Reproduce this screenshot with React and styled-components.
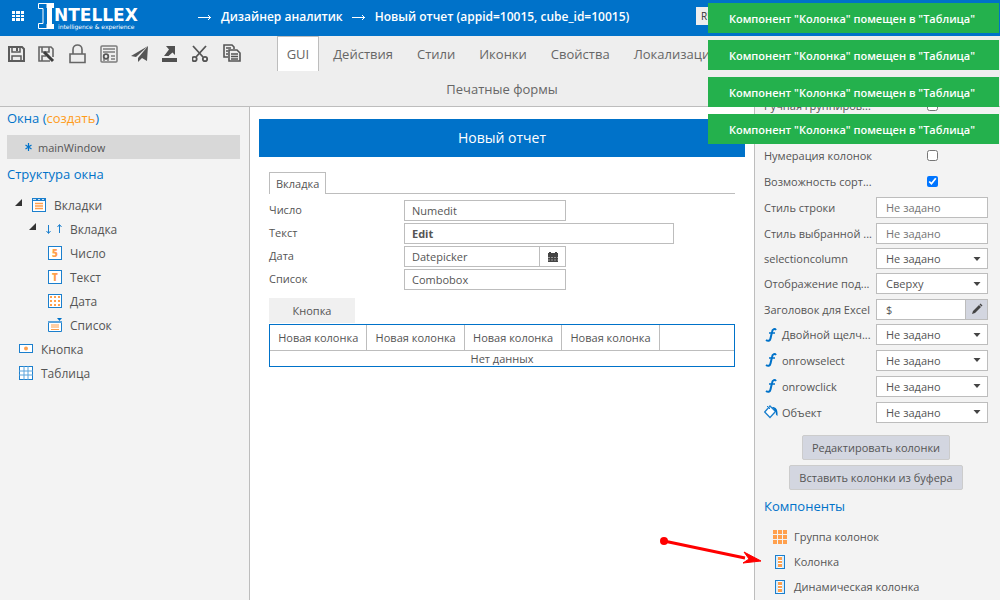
import React from "react";
import styled, { createGlobalStyle } from "styled-components";

const blue = "#0072c9";
const line = "#bdbdbd";
const ink = "#555";
const orange = "#ffa04d";

const GlobalStyle = createGlobalStyle`
  * {
    box-sizing: border-box;
  }
  body {
    margin: 0;
    font-family: "Open Sans", "Noto Sans", sans-serif;
    font-size: 11px;
    color: ${ink};
  }
  button, input, select {
    font: inherit;
    color: inherit;
    margin: 0;
  }
  svg {
    display: block;
    flex: none;
  }
`;

const Page = styled.div`
  position: relative;
  display: flex;
  flex-direction: column;
  height: 100vh;
  overflow: hidden;
  background: #fff;
`;

const Header = styled.header`
  display: flex;
  align-items: center;
  flex: none;
  height: 36px;
  padding-left: 12px;
  background: ${blue};
  color: #fff;
`;

const PlainButton = styled.button`
  display: flex;
  align-items: center;
  justify-content: center;
  padding: 0;
  border: 0;
  background: none;
  cursor: pointer;
`;

const Logo = styled.a`
  display: flex;
  width: 162px;
  padding: 0 0 4px 14px;
  color: #fff;
  text-decoration: none;
`;

const LogoText = styled.span`
  display: flex;
  flex-direction: column;
  padding-top: 5px;
  font-family: "DejaVu Sans", sans-serif;
`;

const LogoName = styled.b`
  font-size: 17px;
  line-height: 16px;
`;

const LogoTagline = styled.span`
  padding-left: 4px;
  font-size: 6px;
  line-height: 7px;
`;

const Crumbs = styled.nav`
  display: flex;
  align-items: center;
  flex: 1;
  gap: 9px;
  padding: 0 0 3px 12px;
  font-size: 12px;
  font-weight: 600;
  white-space: nowrap;
  a {
    color: #fff;
    text-decoration: none;
  }
`;

const Language = styled.button`
  width: 28px;
  height: 18px;
  margin: 0 276px 4px 0;
  padding: 0 5px;
  border: 0;
  background: #eee;
  color: #333;
  font-size: 10px;
  text-align: left;
`;

const Toolbar = styled.div`
  display: grid;
  grid-template-columns: 250px 1fr 246px;
  flex: none;
  background: #eee;
  border-bottom: 1px solid ${line};
`;

const Tools = styled.div`
  display: flex;
  align-items: flex-start;
  gap: 11px;
  padding: 8px 0 0 6px;
`;

const Tabs = styled.nav`
  display: flex;
  flex-wrap: wrap;
  justify-content: center;
  column-gap: 4px;
`;

const Tab = styled.button`
  height: 35px;
  padding: 0 9px;
  border: 1px solid ${(props) => (props.$active ? line : "transparent")};
  border-bottom: 0;
  background: ${(props) => (props.$active ? "#fff" : "none")};
  color: #666;
  font-size: 13px;
  cursor: pointer;
`;

const Workspace = styled.div`
  display: grid;
  grid-template-columns: 250px 1fr 246px;
  flex: 1;
  min-height: 0;
`;

const Structure = styled.aside`
  padding: 1px 9px 0 7px;
  background: #f3f3f3;
  border-right: 1px solid ${line};
`;

const PanelTitle = styled.h2`
  margin: 0;
  color: ${blue};
  font-size: 13px;
  font-weight: 400;
  line-height: 20px;
  a {
    color: #ff9c1a;
    text-decoration: none;
  }
`;

const WindowItem = styled.button`
  display: flex;
  align-items: center;
  gap: 6px;
  width: 100%;
  height: 24px;
  margin: 7px 0 5px;
  padding: 0 0 0 18px;
  border: 0;
  background: #d8d8d8;
`;

const Tree = styled.ul`
  margin: 9px 0 0;
  padding: 0;
  list-style: none;
`;

const Node = styled.li`
  display: flex;
  align-items: center;
  gap: 8px;
  height: 24px;
  padding-left: ${(props) => props.$indent}px;
  font-size: 12px;
`;

const Canvas = styled.main`
  padding: 12px 9px;
`;

const Banner = styled.h1`
  margin: 0;
  background: ${blue};
  color: #fff;
  font-size: 14px;
  font-weight: 400;
  line-height: 38px;
  text-align: center;
`;

const Form = styled.div`
  padding: 15px 10px 0;
`;

const FormTabs = styled.div`
  display: flex;
  border-bottom: 1px solid ${line};
`;

const FormTab = styled.button`
  height: 22px;
  margin-bottom: -1px;
  padding: 0 6px;
  border: 1px solid ${line};
  border-bottom: 0;
  background: #fff;
`;

const Fields = styled.div`
  display: grid;
  gap: 2px;
  padding-top: 6px;
`;

const Field = styled.div`
  display: grid;
  grid-template-columns: 135px 1fr;
  height: 21px;
  line-height: 20px;
`;

const TextBox = styled.input`
  width: ${(props) => props.$width}px;
  min-width: 0;
  height: 21px;
  padding: 0 7px;
  border: 1px solid ${line};
  background: #fff;
  font-weight: ${(props) => (props.$bold ? 700 : 400)};
  outline: none;
`;

const WithButton = styled.div`
  display: flex;
`;

const SideButton = styled(PlainButton)`
  width: ${(props) => props.$width}px;
  height: 21px;
  border: 1px solid ${line};
  border-left: 0;
  background: ${(props) => (props.$filled ? "#d3d6e0" : "#fff")};
`;

const FormButton = styled.button`
  display: block;
  width: 86px;
  height: 25px;
  margin: 8px 0 1px;
  border: 0;
  background: #f0f0f0;
`;

const Table = styled.table`
  width: 100%;
  border: 1px solid ${blue};
  border-spacing: 0;
  table-layout: fixed;
  th {
    height: 26px;
    padding: 0;
    border: solid ${line};
    border-width: 0 1px 1px 0;
    font-weight: 400;
    white-space: nowrap;
  }
  th:last-child {
    border-right: 0;
  }
  td {
    padding: 0;
    line-height: 15px;
    text-align: center;
  }
`;

const Properties = styled.aside`
  overflow: hidden;
  padding: 0 12px 0 9px;
  background: #f3f3f3;
  border-left: 1px solid ${line};
`;

const PropertyList = styled.div`
  margin-top: -15px;
`;

const Property = styled.div`
  display: grid;
  grid-template-columns: 112px 1fr;
  align-items: center;
  height: ${(props) => (props.$compact ? 25 : 26)}px;
  margin-bottom: ${(props) => (props.$spaced ? 24 : 0)}px;
`;

const PropertyLabel = styled.label`
  display: flex;
  align-items: center;
  gap: 4px;
  white-space: nowrap;
`;

const Check = styled.input`
  justify-self: center;
  width: 11px;
  height: 11px;
`;

const ValueBox = styled.input`
  flex: 1;
  width: 100%;
  min-width: 0;
  height: 21px;
  padding: 0 9px;
  border: 1px solid ${line};
  background: #fff;
  outline: none;
`;

const SelectWrap = styled.div`
  display: grid;
  align-items: center;
  & > * {
    grid-area: 1 / 1;
  }
  svg {
    justify-self: end;
    margin-right: 7px;
    pointer-events: none;
  }
`;

const Select = styled.select`
  appearance: none;
  width: 100%;
  height: 21px;
  padding: 0 9px;
  border: 1px solid ${line};
  border-radius: 0;
  background: #fff;
`;

const Actions = styled.div`
  display: flex;
  flex-direction: column;
  align-items: center;
  gap: 5px;
  padding: 10px 0 6px;
`;

const ActionButton = styled.button`
  height: 25px;
  padding: 0 9px;
  border: 1px solid #ccc;
  border-radius: 2px;
  background: #d3d6e0;
`;

const Components = styled.ul`
  margin: 8px 0 0;
  padding: 0 0 0 8px;
  list-style: none;
`;

const ComponentItem = styled.li`
  display: flex;
  align-items: center;
  gap: 6px;
  height: 25px;
  white-space: nowrap;
`;

const Toasts = styled.div`
  position: absolute;
  top: 3px;
  right: 1px;
  display: grid;
  gap: 7px;
`;

const Toast = styled.div`
  padding: 2px 24px 0 21px;
  background: #24b14d;
  color: #fff;
  font-weight: 600;
  line-height: 28px;
  white-space: nowrap;
`;

const Pointer = styled.svg`
  position: absolute;
  right: 238px;
  bottom: 33px;
`;

const toolIcons = {
  "Сохранить": (
    <g fill="none" stroke="#5c5c5c" strokeWidth="2">
      <path d="M3 3H16L18 5V17H3Z" />
      <path d="M6 3V8H14V3M6 17V12H15V17" strokeWidth="1.5" />
      <path d="M11 4V7" />
    </g>
  ),
  "Сохранить как": (
    <g fill="none" stroke="#666" strokeWidth="1.6">
      <path d="M13 17H2V3H14L16 5V13" />
      <path d="M5 3V8H12V3M5 17V12H9" />
      <path d="M7 8L16 17" stroke="#3d3d3d" strokeWidth="3" />
    </g>
  ),
  "Блокировка": (
    <g fill="none" stroke="#666" strokeWidth="1.6">
      <path d="M2 10H17V18.500H2Z" />
      <path d="M5 10V5.500C5 -0.500 14 -0.500 14 5.500V10" />
    </g>
  ),
  "Сертификат": (
    <g fill="none" stroke="#7c7c7c" strokeWidth="1.5">
      <rect x="2" y="2" width="16" height="16" rx="1" />
      <path d="M4 5H16M4 8H16M12 12H16M12 15H16" />
      <circle cx="7" cy="12.500" r="2.300" stroke="#555" strokeWidth="1.800" />
      <path d="M5 15V17M9 15V17" />
    </g>
  ),
  "Отправить": (
    <g fill="#555">
      <path d="M1 12L18 2L6 13Z" />
      <path d="M18 2L17 17L12 14L8 18V14Z" />
    </g>
  ),
  "Выгрузить": (
    <g fill="#505050">
      <path d="M1 14H16V18H1ZM5 2H14V11L11.500 8.500L7.500 12L3 12L8 5.500Z" />
    </g>
  ),
  "Вырезать": (
    <g fill="none" stroke="#555" strokeWidth="1.800">
      <path d="M1 2L11 13M14 2L4 13" />
      <circle cx="2.500" cy="15" r="2.200" />
      <circle cx="13" cy="15" r="2.200" />
    </g>
  ),
  "Копировать": (
    <g fill="none" stroke="#555" strokeWidth="1.600">
      <path d="M5 13H1V1H9L11 3V5M3 4H8M3 7H5M3 10H5" />
      <path d="M6 6H14L17 9V17H6Z" fill="#eee" />
      <path d="M8 10H15M8 12.500H15M8 15H15" strokeWidth="1.400" />
    </g>
  ),
};

const tabs = ["GUI", "Действия", "Стили", "Иконки", "Свойства", "Локализация", "Печатные формы"];

const tree = [
  { name: "Вкладки", icon: "tabs", indent: 8, open: true },
  { name: "Вкладка", icon: "tab", indent: 22, open: true },
  { name: "Число", icon: "number", indent: 41 },
  { name: "Текст", icon: "text", indent: 41 },
  { name: "Дата", icon: "date", indent: 41 },
  { name: "Список", icon: "list", indent: 41 },
  { name: "Кнопка", icon: "button", indent: 12 },
  { name: "Таблица", icon: "table", indent: 12 },
];

const properties = [
  { label: "Ручная группиров...", type: "check", spaced: true },
  { label: "Нумерация колонок", type: "check" },
  { label: "Возможность сорт...", type: "check", checked: true },
  { label: "Стиль строки", type: "text" },
  { label: "Стиль выбранной ...", type: "text" },
  { label: "selectioncolumn", type: "select", value: "Не задано", compact: true },
  { label: "Отображение под...", type: "select", value: "Сверху", compact: true },
  { label: "Заголовок для Excel", type: "edit", value: "$" },
  { label: "Двойной щелч...", type: "select", value: "Не задано", icon: "function", compact: true },
  { label: "onrowselect", type: "select", value: "Не задано", icon: "function" },
  { label: "onrowclick", type: "select", value: "Не задано", icon: "function" },
  { label: "Объект", type: "select", value: "Не задано", icon: "object" },
];

function Dots({ x, y, size, step }) {
  const cells = [0, 1, 2];
  return cells.map((row) =>
    cells.map((col) => (
      <rect key={`${row}${col}`} x={x + col * step} y={y + row * step} width={size} height={size} />
    ))
  );
}

function NodeIcon({ name }) {
  const box = <rect x="0.5" y="0.5" width="13" height="13" fill="#fff" stroke="#1b7fcd" />;
  const glyph = { fill: orange, fontSize: 10, fontWeight: 800, textAnchor: "middle" };
  const drawings = {
    tabs: (
      <>
        {box}
        <path d="M0 0H14V3H0Z" fill="#1b7fcd" />
        <path d="M1 1.500H4M6 1.500H8M10 1.500H12" stroke="#cfe4f5" />
        <path d="M3 5.500H11M3 8H11M3 10.500H11" stroke={orange} strokeWidth="1.500" />
      </>
    ),
    number: <>{box}<text x="7" y="11" {...glyph}>5</text></>,
    text: <>{box}<text x="7" y="11" {...glyph}>T</text></>,
    date: <>{box}<g fill={orange}><Dots x={2} y={2} size={2} step={4} /></g></>,
    list: (
      <>
        <path d="M0.500 3.500H13.500V13.500H0.500Z" fill="#fff" stroke="#1b7fcd" />
        <path d="M0 4H14" stroke="#5ba4dc" strokeWidth="2" />
        <path d="M9 0H14L11.500 3Z" fill={blue} />
        <path d="M3 7H11M3 9H11M3 11.500H11" stroke={orange} />
      </>
    ),
    button: (
      <>
        <rect x="0.5" y="2.5" width="13" height="8" fill="#fff" stroke="#1b7fcd" />
        <circle cx="7" cy="6.500" r="2" fill={orange} />
      </>
    ),
    table: <>{box}<path d="M5 0V14M9 0V14M0 5H14M0 9H14" stroke="#5ba4dc" /></>,
  };
  if (name === "tab") {
    return (
      <svg width="16" height="14" viewBox="0 0 16 14" fill="none" stroke="#1b7fcd">
        <path d="M2.500 3V11M0.500 9L2.500 11.500L4.500 9M13.500 11V3M11.500 5L13.500 2.500L15.500 5" />
      </svg>
    );
  }
  return <svg width="14" height="14" viewBox="0 0 14 14">{drawings[name]}</svg>;
}

function PropertyIcon({ name }) {
  if (name === "function") {
    return (
      <svg width="14" height="16" viewBox="0 0 14 16" fill="none" stroke={blue}>
        <path d="M12 3C11 1.500 8.500 1.500 8 5L6.500 11.500C6 14 4 14.500 2 13" strokeWidth="2" />
        <path d="M5 6H11" strokeWidth="1.500" />
      </svg>
    );
  }
  return (
    <svg width="14" height="14" viewBox="0 0 14 14">
      <path d="M6 1L11.500 6.500L6 12.500L0.700 7Z" fill="#fff" stroke="#1b7fcd" strokeWidth="1.300" />
      <path d="M3 1L6 4" stroke="#1b7fcd" />
      <path d="M8 2C12 2 14 4 13.500 11C12 10 11.500 9 12 7Z" fill={blue} />
    </svg>
  );
}

function Editor({ id, property }) {
  const { type, value, checked } = property;
  if (type === "check") {
    return <Check id={id} type="checkbox" defaultChecked={checked} />;
  }
  if (type === "text") {
    return <ValueBox id={id} placeholder="Не задано" />;
  }
  if (type === "edit") {
    return (
      <WithButton>
        <ValueBox id={id} defaultValue={value} />
        <SideButton $width={22} $filled aria-label="Изменить">
          <svg width="12" height="12" viewBox="0 0 12 12" fill="#444">
            <path d="M1 11L2 8L8 2L10 4L4 10ZM8.500 1.500L9.500 0.500L11.500 2.500L10.500 3.500Z" />
          </svg>
        </SideButton>
      </WithButton>
    );
  }
  return (
    <SelectWrap>
      <Select id={id}>
        <option>{value}</option>
      </Select>
      <svg width="8" height="4" viewBox="0 0 8 4" fill="#444">
        <path d="M0.500 0H7.500L4 4Z" />
      </svg>
    </SelectWrap>
  );
}

function ColumnIcon() {
  return (
    <svg width="16" height="14" viewBox="0 0 16 14">
      <rect x="3.5" y="0.5" width="9" height="13" fill="#fff" stroke="#1b7fcd" />
      <path d="M5 1V13M11 1V13" stroke="#b9d9f0" />
      <path d="M6 2H10V5H6ZM6 6H10V8H6ZM6 9H10V12H6Z" fill={orange} />
    </svg>
  );
}

function CrumbArrow() {
  return (
    <svg width="14" height="8" viewBox="0 0 14 8" fill="none" stroke="#fff">
      <path d="M0 4.500H13M10 2L12.500 4.500L10 7" />
    </svg>
  );
}

export default function App() {
  return (
    <Page>
      <GlobalStyle />
      <Header>
        <PlainButton aria-label="Меню">
          <svg width="12" height="14" viewBox="0 0 12 14" fill="#fff">
            <path d="M0 0H3V3H0ZM4 0H8V3H4ZM9 0H12V3H9ZM0 4H3V6H0ZM4 4H8V6H4ZM9 4H12V6H9ZM0 7H3V10H0ZM4 7H8V10H4ZM9 7H12V10H9Z" />
          </svg>
        </PlainButton>
        <Logo href="#">
          <svg width="16" height="28" viewBox="0 0 16 28">
            <path d="M0.500 1.500H9V6H10V22H9V26.500H0.500V21.500H5V6.500H0.500Z" fill="none" stroke="#fff" />
            <path d="M9 1H16V6H14V22H16V27H9Z" fill="#fff" />
          </svg>
          <LogoText>
            <LogoName>NTELLEX</LogoName>
            <LogoTagline>intelligence &amp; experience</LogoTagline>
          </LogoText>
        </Logo>
        <Crumbs>
          <CrumbArrow />
          <a href="#">Дизайнер аналитик</a>
          <CrumbArrow />
          <a href="#">Новый отчет (appid=10015, cube_id=10015)</a>
        </Crumbs>
        <Language>RU</Language>
      </Header>

      <Toolbar>
        <Tools>
          {Object.entries(toolIcons).map(([name, icon]) => (
            <PlainButton key={name} aria-label={name}>
              <svg width="20" height="20" viewBox="0 0 20 20">{icon}</svg>
            </PlainButton>
          ))}
        </Tools>
        <Tabs>
          {tabs.map((name, i) => (
            <Tab key={name} $active={i === 0}>{name}</Tab>
          ))}
        </Tabs>
      </Toolbar>

      <Workspace>
        <Structure>
          <PanelTitle>
            Окна (<a href="#">создать</a>)
          </PanelTitle>
          <WindowItem>
            <svg width="7" height="8" viewBox="0 0 7 8" stroke={blue} strokeWidth="1.200">
              <path d="M3.500 0V8M0.500 2L6.500 6M6.500 2L0.500 6" />
            </svg>
            mainWindow
          </WindowItem>
          <PanelTitle>Структура окна</PanelTitle>
          <Tree>
            {tree.map((node) => (
              <Node key={node.name} $indent={node.indent}>
                {node.open && (
                  <svg width="9" height="12" viewBox="0 0 9 12" fill="#333">
                    <path d="M0 7L7 0V7Z" />
                  </svg>
                )}
                <NodeIcon name={node.icon} />
                {node.name}
              </Node>
            ))}
          </Tree>
        </Structure>

        <Canvas>
          <Banner>Новый отчет</Banner>
          <Form>
            <FormTabs>
              <FormTab>Вкладка</FormTab>
            </FormTabs>
            <Fields>
              <Field>
                <label htmlFor="number">Число</label>
                <TextBox id="number" $width={162} defaultValue="Numedit" />
              </Field>
              <Field>
                <label htmlFor="text">Текст</label>
                <TextBox id="text" $width={270} $bold defaultValue="Edit" />
              </Field>
              <Field>
                <label htmlFor="date">Дата</label>
                <WithButton>
                  <TextBox id="date" $width={136} defaultValue="Datepicker" />
                  <SideButton $width={26} aria-label="Календарь">
                    <svg width="10" height="10" viewBox="0 0 10 10">
                      <path d="M0 1H1V0H3V1H7V0H9V1H10V10H0Z" fill="#444" />
                      <path d="M0 5.500H10M0 8H10" stroke="#999" strokeDasharray="2 1" />
                    </svg>
                  </SideButton>
                </WithButton>
              </Field>
              <Field>
                <label htmlFor="list">Список</label>
                <TextBox id="list" $width={162} defaultValue="Combobox" />
              </Field>
            </Fields>
            <FormButton>Кнопка</FormButton>
            <Table>
              <colgroup>
                <col width="21%" />
                <col width="21%" />
                <col width="21%" />
                <col width="21%" />
                <col />
              </colgroup>
              <thead>
                <tr>
                  <th>Новая колонка</th>
                  <th>Новая колонка</th>
                  <th>Новая колонка</th>
                  <th>Новая колонка</th>
                  <th />
                </tr>
              </thead>
              <tbody>
                <tr>
                  <td colSpan={5}>Нет данных</td>
                </tr>
              </tbody>
            </Table>
          </Form>
        </Canvas>

        <Properties>
          <PropertyList>
            {properties.map((property, i) => (
              <Property key={property.label} $compact={property.compact} $spaced={property.spaced}>
                <PropertyLabel htmlFor={`property-${i}`}>
                  {property.icon && <PropertyIcon name={property.icon} />}
                  {property.label}
                </PropertyLabel>
                <Editor id={`property-${i}`} property={property} />
              </Property>
            ))}
          </PropertyList>
          <Actions>
            <ActionButton>Редактировать колонки</ActionButton>
            <ActionButton>Вставить колонки из буфера</ActionButton>
          </Actions>
          <PanelTitle>Компоненты</PanelTitle>
          <Components>
            <ComponentItem>
              <svg width="16" height="14" viewBox="0 0 16 14" fill={orange}>
                <Dots x={1} y={0} size={4} step={5} />
              </svg>
              Группа колонок
            </ComponentItem>
            <ComponentItem>
              <ColumnIcon />
              Колонка
            </ComponentItem>
            <ComponentItem>
              <ColumnIcon />
              Динамическая колонка
            </ComponentItem>
          </Components>
        </Properties>
      </Workspace>

      <Pointer width="103" height="32" viewBox="0 0 103 32">
        <circle cx="5" cy="6" r="4" fill="#f00" />
        <path d="M5 6L86 23" stroke="#f00" strokeWidth="3" />
        <path d="M102 26L85 17L90 24L84 28Z" fill="#f00" stroke="#f00" />
      </Pointer>

      <Toasts role="status">
        {[1, 2, 3, 4].map((n) => (
          <Toast key={n}>Компонент "Колонка" помещен в "Таблица"</Toast>
        ))}
      </Toasts>
    </Page>
  );
}
